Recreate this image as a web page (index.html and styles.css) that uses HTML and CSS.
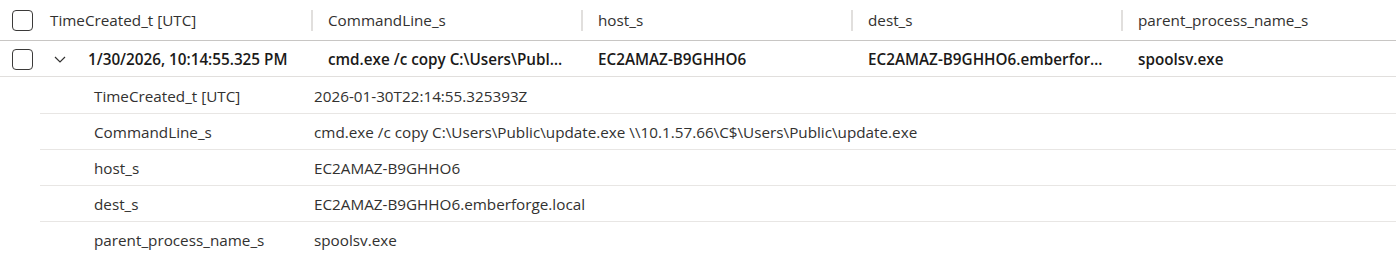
FILE: index.html
```html
<!DOCTYPE html>
<html lang="en">
<head>
    <meta charset="UTF-8">
    <title>Query results</title>
    <link rel="stylesheet" href="styles.css">
</head>
<body>
    <div class="grid">
        <div class="grid-header">
            <div class="cell check-cell"><span class="checkbox"></span></div>
            <div class="cell head first">TimeCreated_t [UTC]</div>
            <div class="cell head"><span class="sep"></span>CommandLine_s</div>
            <div class="cell head"><span class="sep"></span>host_s</div>
            <div class="cell head"><span class="sep"></span>dest_s</div>
            <div class="cell head"><span class="sep"></span>parent_process_name_s</div>
        </div>
        <div class="grid-row">
            <div class="cell check-cell"><span class="checkbox"></span></div>
            <div class="cell value first">
                <svg class="chevron" width="12" height="7" viewBox="0 0 12 7"><path d="M1 1l5 5 5-5" fill="none" stroke="#323130" stroke-width="1.2"/></svg>
                <span class="ellip">1/30/2026, 10:14:55.325 PM</span>
            </div>
            <div class="cell value"><span class="ellip">cmd.exe /c copy C:\Users\Public\update.exe \\10.1.57.66\C$\Users\Public\update.exe</span></div>
            <div class="cell value"><span class="ellip">EC2AMAZ-B9GHHO6</span></div>
            <div class="cell value"><span class="ellip">EC2AMAZ-B9GHHO6.emberforge.local</span></div>
            <div class="cell value"><span class="ellip">spoolsv.exe</span></div>
        </div>
        <div class="details">
            <div class="detail-row"><span class="label">TimeCreated_t [UTC]</span><span class="dval">2026-01-30T22:14:55.325393Z</span></div>
            <div class="detail-row"><span class="label">CommandLine_s</span><span class="dval">cmd.exe /c copy C:\Users\Public\update.exe \\10.1.57.66\C$\Users\Public\update.exe</span></div>
            <div class="detail-row"><span class="label">host_s</span><span class="dval">EC2AMAZ-B9GHHO6</span></div>
            <div class="detail-row"><span class="label">dest_s</span><span class="dval">EC2AMAZ-B9GHHO6.emberforge.local</span></div>
            <div class="detail-row last"><span class="label">parent_process_name_s</span><span class="dval">spoolsv.exe</span></div>
        </div>
    </div>
</body>
</html>
```

FILE: styles.css
```css
body {
    margin: 0;
    padding: 0;
    background: #fff;
    font-family: "Open Sans", "Noto Sans", sans-serif;
    font-size: 15.25px;
    color: #323130;
}

.grid-header,
.grid-row {
    display: grid;
    grid-template-columns: 40px 271px 270px 270px 270px 1fr;
    align-items: center;
}

.grid-header {
    height: 40px;
    border-bottom: 1px solid #c8c6c4;
}

.grid-row {
    height: 35px;
    border-bottom: 1px solid #e1dfdd;
}

.cell {
    display: flex;
    align-items: center;
    min-width: 0;
    white-space: nowrap;
}

.check-cell {
    justify-content: flex-start;
    padding-left: 12px;
}

.checkbox {
    width: 19px;
    height: 19px;
    border: 1.2px solid #3b3a39;
    border-radius: 4px;
    box-sizing: content-box;
}

.grid-row .checkbox {
    margin-top: 1px;
}

.head {
    padding-right: 10px;
}

.head.first {
    padding-left: 10px;
}

.sep {
    width: 2px;
    height: 21px;
    background: #e1dfdd;
    margin-right: 15px;
    flex-shrink: 0;
}

.value {
    font-weight: 600;
    color: #1b1a19;
    padding-left: 17px;
    padding-right: 16px;
}

.value.first {
    padding-left: 14px;
}

.chevron {
    flex-shrink: 0;
    margin-right: 22px;
    margin-top: 1px;
}

.ellip {
    overflow: hidden;
    text-overflow: ellipsis;
}

.details {
    margin-left: 40px;
    padding-top: 1px;
}

.detail-row {
    display: flex;
    align-items: center;
    height: 36px;
    box-sizing: border-box;
    border-bottom: 1px solid #e8e6e4;
}

.detail-row.last {
    border-bottom: none;
}

.label {
    width: 220px;
    padding-left: 54px;
    flex-shrink: 0;
}

.dval {
    white-space: nowrap;
}
```
